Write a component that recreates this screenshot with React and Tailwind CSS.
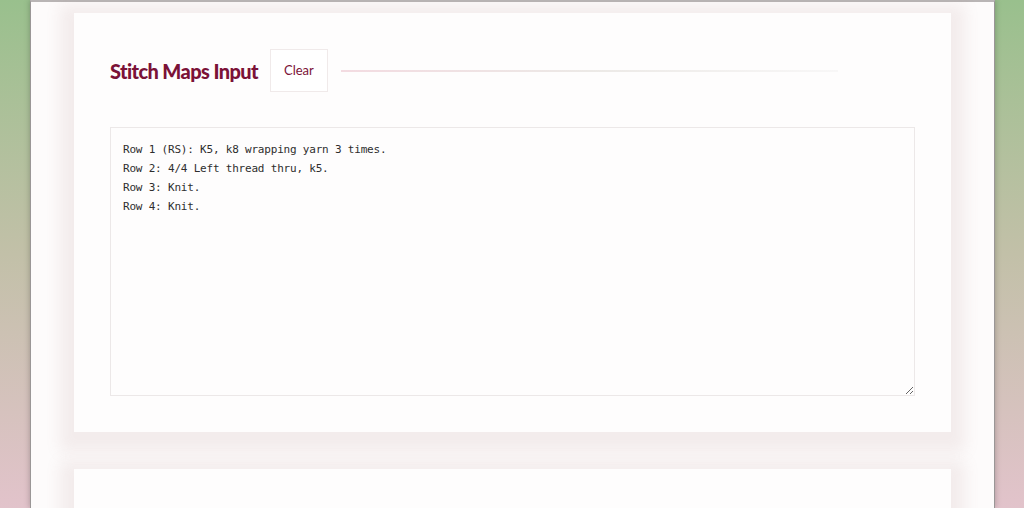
export default function App() {
  const pattern = 'Row 1 (RS): K5, k8 wrapping yarn 3 times.\nRow 2: 4/4 Left thread thru, k5.\nRow 3: Knit.\nRow 4: Knit.';

  return (
    <div className="h-[508px] overflow-hidden bg-gradient-to-b from-[#99c08d] via-[#c2c0a8] to-[#e2c3cb] px-[30px] pr-[29px]">
      <div className="h-full bg-[#fdfbfb] border-t-2 border-t-[#b9b5b5] border-x border-x-[#9a9696] shadow-[0_0_6px_rgba(0,0,0,0.25)] px-[43px] pt-[11px]">
        {/* Input card */}
        <section className="bg-[#fefdfd] shadow-[0_6px_14px_14px_rgba(165,115,120,0.11)] p-9">
          <div className="flex items-center">
            <h2 className="font-['Lato',sans-serif] font-black text-[20px] tracking-[-0.6px] text-[#7b1237]">Stitch Maps Input</h2>
            <button className="ml-3 h-[43px] px-[13px] bg-white border border-[#f0eaea] text-[13px] text-[#7b1237] font-['Lato',sans-serif]">
              Clear
            </button>
            <div className="ml-[13px] w-[497px] h-[2px] bg-gradient-to-r from-[#f3dbe1] via-[#ece9e6] to-[#f8f7f7]" />
          </div>

          <textarea
            defaultValue={pattern}
            spellCheck={false}
            className="mt-[35px] block w-full h-[269px] bg-[#fefdfd] border border-[#ece8e8] px-3 pt-[12px] text-[11px] leading-[19px] tracking-[-0.2px] text-[#2e2e2e] font-['DejaVu_Sans_Mono',monospace] outline-none"
          />
        </section>

        {/* Output card */}
        <section className="mt-[37px] h-[200px] bg-[#fefdfd] shadow-[0_6px_14px_14px_rgba(165,115,120,0.11)]" />
      </div>
    </div>
  );
}
